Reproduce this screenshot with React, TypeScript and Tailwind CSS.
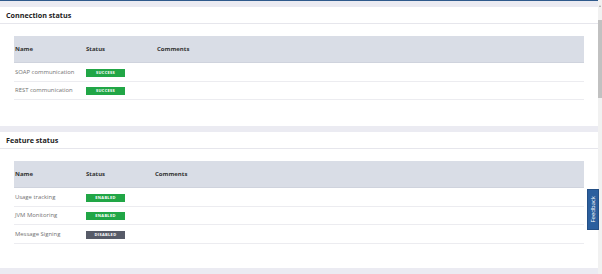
type Row = { name: string; status: "SUCCESS" | "ENABLED" | "DISABLED" };

const connectionRows: Row[] = [
  { name: "SOAP communication", status: "SUCCESS" },
  { name: "REST communication", status: "SUCCESS" },
];

const featureRows: Row[] = [
  { name: "Usage tracking", status: "ENABLED" },
  { name: "JVM Monitoring", status: "ENABLED" },
  { name: "Message Signing", status: "DISABLED" },
];

function StatusBadge({ status }: { status: Row["status"] }) {
  const color = status === "DISABLED" ? "bg-[#575b68]" : "bg-[#21a646]";
  return (
    <span
      className={`inline-flex items-center justify-center w-[39px] h-[8px] ${color} text-white text-[4px] font-bold tracking-[0.3px] leading-none`}
    >
      {status}
    </span>
  );
}

function StatusTable({ rows, statusWidth }: { rows: Row[]; statusWidth: string }) {
  return (
    <div className="mx-[14px] mt-[12px]">
      <div className="flex items-center h-[27px] pt-[1px] bg-[#d9dde6] border-b border-[#cfd3dd] text-[6px] font-bold text-[#333]">
        <div className="w-[72px] pl-[1px]">Name</div>
        <div className={statusWidth}>Status</div>
        <div>Comments</div>
      </div>
      {rows.map((row) => (
        <div
          key={row.name}
          className="flex items-center h-[18.5px] pt-[1px] border-b border-[#ececf0] text-[5.9px] text-[#727272]"
        >
          <div className="w-[72px] pl-[1px]">{row.name}</div>
          <div className={statusWidth}>
            <StatusBadge status={row.status} />
          </div>
        </div>
      ))}
    </div>
  );
}

function Panel({ title, children, height }: { title: string; children: React.ReactNode; height: string }) {
  return (
    <section className={`bg-white ${height}`}>
      <div className="h-[17px] flex items-center pl-[6px] pt-[1px] border-b border-[#e6e6ec] text-[7.2px] font-bold text-[#222]">
        {title}
      </div>
      {children}
    </section>
  );
}

export default function App() {
  return (
    <div
      className="relative w-[602px] h-[274px] overflow-hidden flex bg-[#ebebf2]"
      style={{ fontFamily: '"Open Sans", "Noto Sans", sans-serif' }}
    >
      <div className="flex-1 flex flex-col border-t border-[#2f5a8c] pt-[6px] gap-[6px]">
        <Panel title="Connection status" height="h-[119px]">
          <StatusTable rows={connectionRows} statusWidth="w-[71px]" />
        </Panel>
        <Panel title="Feature status" height="h-[136px]">
          <StatusTable rows={featureRows} statusWidth="w-[69px]" />
        </Panel>
      </div>

      {/* scrollbar */}
      <div className="w-[4px] bg-[#f1f1f1] flex flex-col items-center">
        <div className="h-[7px] w-full flex items-end justify-center">
          <div className="w-0 h-0 border-l-[1.5px] border-r-[1.5px] border-b-[2px] border-l-transparent border-r-transparent border-b-[#a3a3a3]" />
        </div>
        <div className="mt-[13px] h-[78px] w-[4px] bg-[#c1c1c1]" />
      </div>

      <div className="absolute left-[587px] top-[189px] w-[12px] h-[41px] bg-[#2b5f9e] border border-[#244f85] flex items-center justify-center">
        <span className="[writing-mode:vertical-rl] rotate-180 text-white text-[6px] leading-none">
          Feedback
        </span>
      </div>
    </div>
  );
}
